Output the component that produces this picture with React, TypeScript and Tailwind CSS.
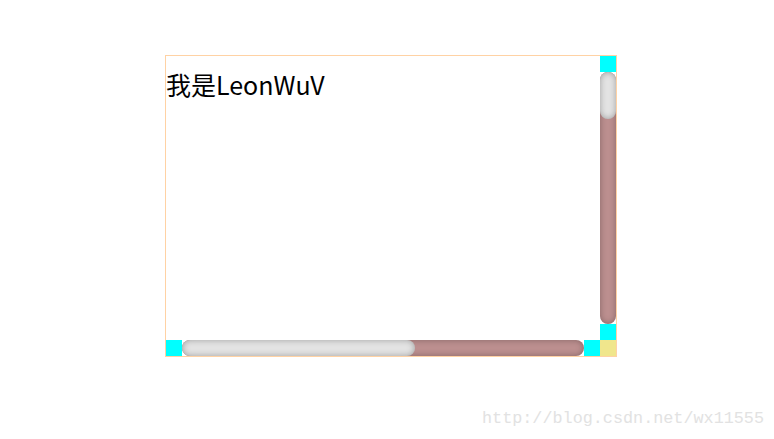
import React from "react";

// Hand-drawn scrollbars (headless browser hides native ones)
const track =
  "flex rounded-[10px] bg-[#bc8f8f] shadow-[inset_0_0_6px_rgba(0,0,0,0.3)]";
const thumb =
  "rounded-[10px] bg-[#e3e3e3] shadow-[inset_0_0_6px_rgba(0,0,0,0.3)]";

const App: React.FC = () => {
  return (
    <div className="relative h-[439px] w-full bg-white">
      <div className="pt-[55px] pl-[165px]">
        <div className="flex h-[302px] w-[452px] flex-col border border-solid border-[color:#ffd2a4]">
          <div className="flex min-h-0 flex-1">
            <div className="min-w-0 flex-1 overflow-hidden pt-[12px]">
              <p className="font-['Noto_Sans_CJK_SC','Noto_Sans',sans-serif] text-[25px] leading-[33px] text-black whitespace-nowrap">
                我是LeonWuV
              </p>
            </div>
            {/* Vertical scrollbar */}
            <div className="flex w-4 flex-col">
              <div className="h-4 bg-[#00ffff]" />
              <div className={track + " flex-1 flex-col"}>
                <div className={thumb + " h-[47px]"} />
              </div>
              <div className="h-4 bg-[#00ffff]" />
            </div>
          </div>
          {/* Horizontal scrollbar */}
          <div className="flex h-4">
            <div className="w-4 bg-[#00ffff]" />
            <div className={track + " flex-1"}>
              <div className={thumb + " w-[233px]"} />
            </div>
            <div className="w-4 bg-[#00ffff]" />
            <div className="w-4 bg-[#f0e68c]" />
          </div>
        </div>
      </div>

      {/* Watermark */}
      <div className="absolute right-[10px] bottom-[8px] font-['Liberation_Mono',monospace] text-[16.8px] text-[#e2e2e2]">
        http://blog.csdn.net/wx11555
      </div>
    </div>
  );
};

export default App;
